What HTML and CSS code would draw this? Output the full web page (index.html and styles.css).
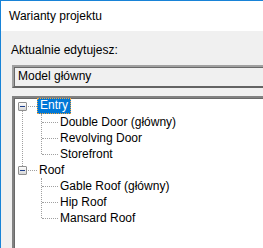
FILE: index.html
```html
<!DOCTYPE html>
<html lang="pl">
<head>
    <meta charset="UTF-8">
    <title>Warianty projektu</title>
    <link rel="stylesheet" href="styles.css">
</head>
<body>
    <div class="okno">
        <div class="pasek-tytulu">Warianty projektu</div>

        <div class="tresc">
            <div class="etykieta">Aktualnie edytujesz:</div>
            <div class="lista-rozwijana">Model główny</div>

            <div class="drzewo">
                <div class="galaz">
                    <div class="wiersz rodzic">
                        <span class="zwin"></span>
                        <span class="galazka"></span>
                        <span class="nazwa wybrany">Entry</span>
                    </div>
                    <div class="dzieci">
                        <div class="wiersz dziecko"><span class="galazka"></span><span class="nazwa">Double Door (główny)</span></div>
                        <div class="wiersz dziecko"><span class="galazka"></span><span class="nazwa">Revolving Door</span></div>
                        <div class="wiersz dziecko"><span class="galazka"></span><span class="nazwa">Storefront</span></div>
                    </div>
                </div>

                <div class="galaz ostatnia">
                    <div class="wiersz rodzic">
                        <span class="zwin"></span>
                        <span class="galazka"></span>
                        <span class="nazwa">Roof</span>
                    </div>
                    <div class="dzieci">
                        <div class="wiersz dziecko"><span class="galazka"></span><span class="nazwa">Gable Roof (główny)</span></div>
                        <div class="wiersz dziecko"><span class="galazka"></span><span class="nazwa">Hip Roof</span></div>
                        <div class="wiersz dziecko"><span class="galazka"></span><span class="nazwa">Mansard Roof</span></div>
                    </div>
                </div>
            </div>
        </div>
    </div>
</body>
</html>
```

FILE: styles.css
```css
* {
    margin: 0;
    padding: 0;
    box-sizing: border-box;
}

html, body {
    height: 100%;
    overflow: hidden;
}

body {
    font-family: "Liberation Sans", Arial, sans-serif;
    font-size: 12px;
    color: #000;
    background-color: #f0f0f0;
}

.okno {
    height: 100%;
    border-top: 1px solid #1883d7;
    border-left: 1px solid #1883d7;
    display: flex;
    flex-direction: column;
}

.pasek-tytulu {
    height: 30px;
    line-height: 30px;
    padding-left: 8px;
    background-color: #fff;
    flex-shrink: 0;
}

.tresc {
    flex: 1;
    padding: 11px 0 0 10px;
    display: flex;
    flex-direction: column;
}

.etykieta {
    line-height: 16px;
}

.lista-rozwijana {
    margin: 7px 0 0 1px;
    width: 300px;
    height: 23px;
    line-height: 19px;
    padding-left: 4px;
    border: 2px solid #646464;
    border-top-color: #a0a0a0;
    border-left-color: #a0a0a0;
    box-shadow: inset 1px 1px 0 #696969;
    background-color: #f0f0f0;
}

.drzewo {
    margin: 8px 0 0 1px;
    width: 300px;
    flex: 1;
    min-height: 200px;
    border: 2px solid #828282;
    border-right: none;
    border-bottom: none;
    box-shadow: inset 1px 1px 0 #696969;
    background-color: #fff;
}

.galaz {
    position: relative;
}

/* pionowa linia miedzy wezlami glownymi */
.galaz::before {
    content: "";
    position: absolute;
    left: 8px;
    top: 13px;
    height: 55px;
    border-left: 1px dotted #a0a0a0;
}

.galaz.ostatnia::before {
    display: none;
}

.wiersz {
    height: 16px;
    display: flex;
    align-items: center;
}

.rodzic {
    padding-left: 4px;
}

.zwin {
    width: 9px;
    height: 9px;
    border: 1px solid #8f8f8f;
    border-radius: 1px;
    background: linear-gradient(#fdfdfd, #d6d6d6);
    position: relative;
    flex-shrink: 0;
}

.zwin::after {
    content: "";
    position: absolute;
    left: 1px;
    top: 3px;
    width: 5px;
    height: 1px;
    background-color: #1e3f8a;
}

.galazka {
    height: 1px;
    border-top: 1px dotted #a0a0a0;
    flex-shrink: 0;
}

.rodzic .galazka {
    width: 9px;
    margin-left: 1px;
}

.nazwa {
    line-height: 15px;
    padding: 0 2px;
    white-space: nowrap;
}

.wybrany {
    background-color: #0078d7;
    color: #fff;
    outline: 1px dotted #f2a33a;
    outline-offset: -1px;
    padding: 0 3px 1px 3px;
}

.dzieci {
    position: relative;
}

/* pionowa linia galezi dzieci */
.dzieci::before {
    content: "";
    position: absolute;
    left: 27px;
    top: 0;
    bottom: 8px;
    border-left: 1px dotted #a0a0a0;
}

.dziecko {
    padding-left: 28px;
}

.dziecko .galazka {
    width: 16px;
}
```
